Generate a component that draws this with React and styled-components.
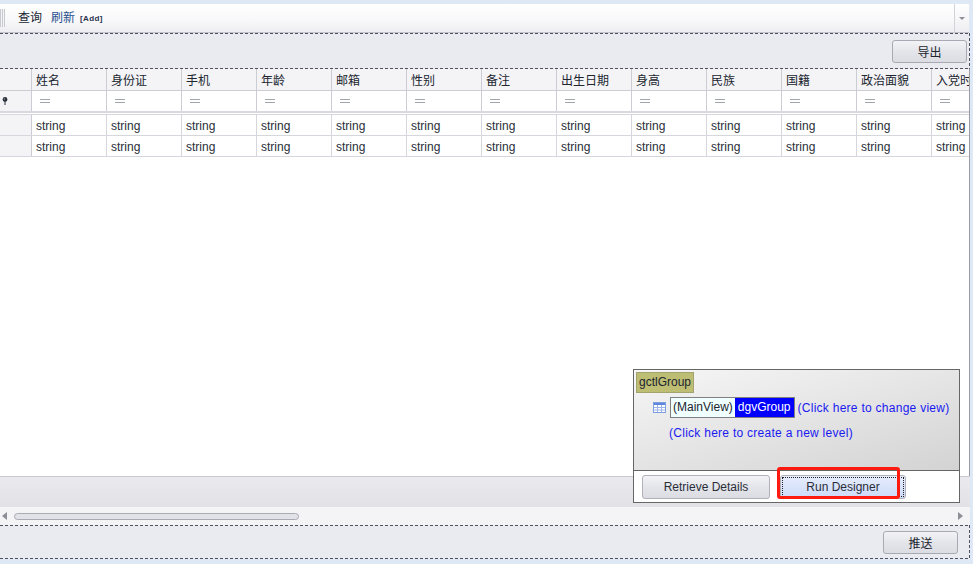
import React from "react"
import styled, { createGlobalStyle } from "styled-components"

const columns = ["姓名", "身份证", "手机", "年龄", "邮箱", "性别", "备注", "出生日期", "身高", "民族", "国籍", "政治面貌", "入党时间"]
const rows = [0, 1]

const App = () => (
  <Window>
    <GlobalStyle />
    <Toolbar>
      <BarMain>
        <Grip />
        <ToolItem>查询</ToolItem>
        <ToolItem $accent>刷新</ToolItem>
        <AddTag>[Add]</AddTag>
      </BarMain>
      <BarDrop>
        <svg width="6" height="3" viewBox="0 0 6 3">
          <path d="M0 0h6L3 3z" fill="#8d8f96" />
        </svg>
      </BarDrop>
    </Toolbar>

    <ActionPanel>
      <FlatButton>导出</FlatButton>
    </ActionPanel>

    <GridArea>
      <HeaderRow>
        <Indicator />
        {columns.map(name => (
          <HeaderCell key={name}>{name}</HeaderCell>
        ))}
      </HeaderRow>
      <FilterRow>
        <Indicator>
          <svg width="6" height="8" viewBox="0 0 6 8">
            <circle cx="3" cy="2.4" r="2.4" fill="#2a2f3a" />
            <circle cx="2.4" cy="1.9" r="0.7" fill="#9aa0aa" />
            <rect x="2.5" y="4" width="1" height="4" fill="#2a2f3a" />
          </svg>
        </Indicator>
        {columns.map(name => (
          <FilterCell key={name}>
            <svg width="10" height="4" viewBox="0 0 10 4">
              <path d="M0 .5h10M0 3.5h10" stroke="#a3a5ad" strokeWidth="1" />
            </svg>
          </FilterCell>
        ))}
      </FilterRow>
      {rows.map(row => (
        <DataRow key={row} $first={row === 0}>
          <Indicator />
          {columns.map(name => (
            <DataCell key={name}>string</DataCell>
          ))}
        </DataRow>
      ))}
    </GridArea>

    <FooterBar />

    <ScrollRow>
      <svg width="5" height="8" viewBox="0 0 5 8">
        <path d="M5 0v8L0 4z" fill="#8d8f96" />
      </svg>
      <ScrollTrack>
        <ScrollThumb />
      </ScrollTrack>
      <svg width="5" height="8" viewBox="0 0 5 8">
        <path d="M0 0v8l5-4z" fill="#8d8f96" />
      </svg>
    </ScrollRow>

    <BottomPanel>
      <FlatButton>推送</FlatButton>
    </BottomPanel>

    <LevelPopup>
      <LevelTree>
        <RootTag>gctlGroup</RootTag>
        <LevelLine>
          <svg width="13" height="11" viewBox="0 0 13 11">
            <rect x="0.5" y="0.5" width="12" height="10" fill="#fff" stroke="#7f9fe0" />
            <rect x="1" y="1" width="11" height="2" fill="#5f86dc" />
            <path d="M4.5 3v7M8.5 3v7M1 5.5h11M1 8h11" stroke="#9db6ea" />
          </svg>
          <ViewTags>
            <ViewTag>(MainView)</ViewTag>
            <ViewTag $selected>dgvGroup</ViewTag>
          </ViewTags>
          <LevelLink>(Click here to change view)</LevelLink>
        </LevelLine>
        <NewLevel>(Click here to create a new level)</NewLevel>
      </LevelTree>
      <PopupActions>
        <PopupButton>Retrieve Details</PopupButton>
        <PopupButton $focused>
          <FocusBox>Run Designer</FocusBox>
        </PopupButton>
      </PopupActions>
      <RedMark />
    </LevelPopup>
  </Window>
)

export default App

const GlobalStyle = createGlobalStyle`
  html, body {
    margin: 0;
    padding: 0;
    overflow: hidden;
    background: #dfe9f5;
  }
`

const fontStack = `"Liberation Sans", "Noto Sans CJK SC", sans-serif`
const dashH = `repeating-linear-gradient(90deg, #50505f 0 3px, transparent 3px 5px)`
const dashV = `repeating-linear-gradient(180deg, #50505f 0 3px, transparent 3px 5px)`

const Window = styled.div`
  position: relative;
  width: 973px;
  height: 564px;
  box-sizing: border-box;
  padding: 4px 3px 5px 0;
  display: flex;
  flex-direction: column;
  background: #dfe9f5;
  font-family: ${fontStack};
  font-size: 12px;
  color: #20242e;
  overflow: hidden;
`

// TOOLBAR
const Toolbar = styled.div`
  height: 29px;
  flex: none;
  display: flex;
  padding-right: 1px;
`

const BarMain = styled.div`
  flex: 1;
  display: flex;
  align-items: center;
  background: linear-gradient(#ffffff, #f8f8fa 60%, #eeeef2);
  border-bottom: 1px solid #c2c3cb;
`

const Grip = styled.div`
  width: 5px;
  height: 18px;
  margin-right: 13px;
  background: repeating-linear-gradient(90deg, #c9cad1 0 1px, #f4f4f6 1px 2px);
`

const ToolItem = styled.span`
  margin-right: 9px;
  line-height: 30px;
  color: ${props => (props.$accent ? "#1f4f8f" : "#20242e")};
`

const AddTag = styled.span`
  margin-left: -4px;
  font-size: 8px;
  font-weight: bold;
  letter-spacing: 0.4px;
  color: #2a3350;
`

const BarDrop = styled.div`
  width: 14px;
  display: flex;
  align-items: center;
  justify-content: center;
  background: linear-gradient(#ffffff, #eeeef2);
  border-left: 1px solid #d2d3da;
  border-bottom: 1px solid #c2c3cb;
`

// PANELS
const ActionPanel = styled.div`
  flex: none;
  height: 36px;
  box-sizing: border-box;
  display: flex;
  justify-content: flex-end;
  align-items: center;
  padding-right: 3px;
  background:
    ${dashH} top / 100% 1px no-repeat,
    ${dashH} bottom / 100% 1px no-repeat,
    ${dashV} right / 1px 100% no-repeat,
    #e9ebf0;
`

const BottomPanel = styled(ActionPanel)`
  height: 34px;
  padding-right: 12px;
`

const FlatButton = styled.div`
  width: 75px;
  height: 23px;
  box-sizing: border-box;
  display: flex;
  align-items: center;
  justify-content: center;
  border: 1px solid #a8a9b2;
  border-radius: 3px;
  background: linear-gradient(#f3f3f6, #e4e5ea 50%, #dcdde3);
  color: #20242e;
`

// GRID
const GridArea = styled.div`
  flex: 1;
  overflow: hidden;
  background: #ffffff;
  border-right: 1px solid #9b9ca6;
`

const GridRow = styled.div`
  display: grid;
  grid-template-columns: 32px repeat(13, 75px);
  box-sizing: border-box;
  width: 1007px;
`

const HeaderRow = styled(GridRow)`
  height: 22px;
  border-bottom: 1px solid #cbccd4;
  background: #f4f4f7;
`

const FilterRow = styled(GridRow)`
  height: 22px;
  margin-bottom: 1px;
  border-bottom: 2px solid #d8d8de;
`

const DataRow = styled(GridRow)`
  height: ${props => (props.$first ? "22px" : "21px")};
  border-bottom: 1px solid #d6d7dd;
  border-top: ${props => (props.$first ? "1px solid #d6d7dd" : "none")};
`

const Indicator = styled.div`
  display: flex;
  align-items: center;
  padding-left: 2px;
  border-right: 1px solid #cbccd4;
  background: #f4f4f7;
`

const HeaderCell = styled.div`
  display: flex;
  align-items: center;
  padding-left: 4px;
  white-space: nowrap;
  overflow: hidden;
  border-right: 1px solid #cbccd4;
`

const FilterCell = styled.div`
  display: flex;
  align-items: center;
  padding-left: 8px;
  border-right: 1px solid #cbccd4;
`

const DataCell = styled.div`
  display: flex;
  align-items: center;
  padding: 1px 0 0 4px;
  color: #2a2e38;
  border-right: 1px solid #d6d7dd;
`

const FooterBar = styled.div`
  flex: none;
  height: 31px;
  box-sizing: border-box;
  border-top: 1px solid #c8c9d1;
  background: linear-gradient(#e9e9ee, #e1e1e6);
`

const ScrollRow = styled.div`
  flex: none;
  height: 18px;
  box-sizing: border-box;
  display: flex;
  align-items: center;
  gap: 7px;
  padding: 0 7px 0 2px;
  background: #f4f4f6;
`

const ScrollTrack = styled.div`
  flex: 1;
`

const ScrollThumb = styled.div`
  width: 285px;
  height: 7px;
  box-sizing: border-box;
  border: 1px solid #a9aab3;
  border-radius: 4px;
  background: #e2e3e8;
`

// LEVEL POPUP
const LevelPopup = styled.div`
  position: absolute;
  left: 633px;
  top: 369px;
  width: 327px;
  height: 134px;
  box-sizing: border-box;
  display: flex;
  flex-direction: column;
  border: 1px solid #666;
  background: #ffffff;
`

const LevelTree = styled.div`
  flex: 1;
  padding: 2px;
  background: linear-gradient(165deg, #f6f6f6, #d3d3d3);
  border-bottom: 1px solid #666;
`

const RootTag = styled.div`
  display: inline-block;
  height: 21px;
  box-sizing: border-box;
  padding: 0 2px;
  line-height: 19px;
  color: #20242e;
  background: #bdbd74;
  border: 1px solid #a3a36d;
`

const LevelLine = styled.div`
  display: flex;
  align-items: center;
  gap: 4px;
  margin: 4px 0 0 17px;
`

const ViewTags = styled.div`
  display: flex;
  border: 1px solid #808080;
`

const ViewTag = styled.span`
  height: 19px;
  line-height: 19px;
  padding: ${props => (props.$selected ? "0 3px" : "0 2px")};
  color: ${props => (props.$selected ? "#ffffff" : "#20242e")};
  background: ${props => (props.$selected ? "#0000ff" : "#f0ffff")};
`

const LevelLink = styled.span`
  margin-left: -1px;
  letter-spacing: 0.27px;
  color: #1a1af0;
`

const NewLevel = styled.div`
  margin: 8px 0 0 33px;
  letter-spacing: 0.27px;
  color: #1a1af0;
`

const PopupActions = styled.div`
  flex: none;
  height: 31px;
  display: flex;
  align-items: center;
  gap: 10px;
  padding-left: 8px;
`

const PopupButton = styled.div`
  width: ${props => (props.$focused ? "126px" : "128px")};
  height: 24px;
  box-sizing: border-box;
  padding: 1px;
  display: flex;
  align-items: center;
  justify-content: center;
  border: 1px solid #b0b1b9;
  border-radius: 3px;
  color: #2a2e38;
  background: ${props =>
    props.$focused
      ? "linear-gradient(#e6edfd, #ccd9f8)"
      : "linear-gradient(#f3f3f6, #e4e5ea 50%, #dcdde3)"};
`

const FocusBox = styled.div`
  flex: 1;
  align-self: stretch;
  display: flex;
  align-items: center;
  justify-content: center;
  border: 1px dotted #222;
`

const RedMark = styled.div`
  position: absolute;
  left: 143px;
  top: 97px;
  width: 123px;
  height: 32px;
  box-sizing: border-box;
  border: 3px solid #ff1a10;
  border-radius: 3px;
`
